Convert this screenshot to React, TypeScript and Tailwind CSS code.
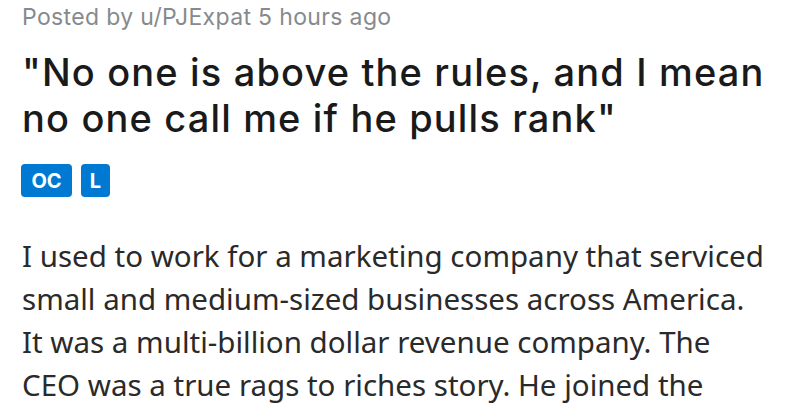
const badges = [
  { label: "OC", width: "w-[51px]" },
  { label: "L", width: "w-[29px]" },
];

const body = [
  "I used to work for a marketing company that serviced",
  "small and medium-sized businesses across America.",
  "It was a multi-billion dollar revenue company. The",
  "CEO was a true rags to riches story. He joined the",
];

export default function App() {
  return (
    <div className="w-[800px] h-[420px] overflow-hidden bg-white px-[22px] pt-[2px]">
      <p className="font-['Inter',sans-serif] text-[23px] tracking-[0.35px] leading-[30px] text-[#878a8c]">
        Posted by u/PJExpat 5 hours ago
      </p>
      <h1 className="mt-[17px] font-['Inter',sans-serif] font-medium text-[38px] tracking-[1.15px] leading-[46px] text-[#1a1a1b]">
        <span className="block">"No one is above the rules, and I mean</span>
        <span className="block">no one call me if he pulls rank"</span>
      </h1>
      <div className="mt-[23px] flex gap-[9px] -ml-[1px]">
        {badges.map((b) => (
          <span
            key={b.label}
            className={`${b.width} h-[33px] flex items-center justify-center rounded-[4px] bg-[#0079d3] text-white font-['Inter',sans-serif] font-bold text-[20px]`}
          >
            {b.label}
          </span>
        ))}
      </div>
      <p className="mt-[37px] font-['Noto_Sans',sans-serif] text-[29.5px] leading-[43px] text-[#2a2a2a]">
        {body.map((line) => (
          <span key={line} className="block whitespace-nowrap">
            {line}
          </span>
        ))}
      </p>
    </div>
  );
}
